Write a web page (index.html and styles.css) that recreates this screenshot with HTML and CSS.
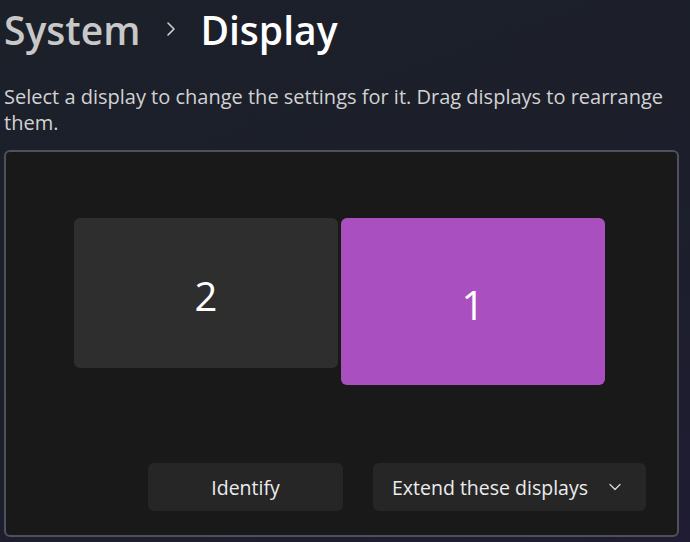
FILE: index.html
```html
<!DOCTYPE html>
<html>
<head>
<meta charset="utf-8">
<link rel="stylesheet" href="styles.css">
</head>
<body>
<div class="page">
  <div class="title">
    <span class="crumb">System</span>
    <svg class="sep" width="14" height="16" viewBox="0 0 14 16"><path d="M4 2 L10 8 L4 14" fill="none" stroke="#cfcfcf" stroke-width="1.6" stroke-linecap="round" stroke-linejoin="round"/></svg>
    <span class="current">Display</span>
  </div>
  <p class="desc">Select a display to change the settings for it. Drag displays to rearrange them.</p>
  <div class="panel">
    <div class="monitors">
      <div class="mon mon2">2</div>
      <div class="mon mon1">1</div>
    </div>
    <div class="actions">
      <button class="btn identify">Identify</button>
      <button class="btn dropdown">Extend these displays
        <svg width="14" height="10" viewBox="0 0 14 10"><path d="M2 2.5 L7 7.5 L12 2.5" fill="none" stroke="#d8d8d8" stroke-width="1.3" stroke-linecap="round" stroke-linejoin="round"/></svg>
      </button>
    </div>
  </div>
</div>
</body>
</html>
```
FILE: styles.css
```css
html, body {
  margin: 0;
  padding: 0;
}
body {
  width: 690px;
  height: 542px;
  overflow: hidden;
  background: linear-gradient(160deg, #1c2029 0%, #1c1f2b 55%, #1f1c33 100%);
  font-family: "Open Sans", "Noto Sans", sans-serif;
  color: #fff;
}
.page {
  padding: 0 0 0 4px;
}
.title {
  display: flex;
  align-items: center;
  height: 58px;
}
.crumb {
  font-size: 39px;
  font-weight: 600;
  color: #c8c8c8;
}
.sep {
  margin: 0 22px 0 24px;
  position: relative;
  top: 0;
}
.current {
  font-size: 39px;
  font-weight: 600;
  color: #ffffff;
}
.desc {
  margin: 26px 0 0 0;
  font-size: 20px;
  line-height: 26px;
  color: #d2d2d2;
  width: 680px;
}
.panel {
  margin-top: 14px;
  width: 671px;
  height: 383px;
  border: 2px solid #4e5159;
  border-radius: 6px;
  background: #191919;
  display: flex;
  flex-direction: column;
}
.monitors {
  display: flex;
  align-items: flex-start;
  gap: 3px;
  padding: 66px 0 0 68px;
}
.mon {
  display: flex;
  align-items: center;
  justify-content: center;
  box-sizing: border-box;
  padding-top: 5px;
  border-radius: 6px;
  font-size: 40px;
  color: #ffffff;
  width: 264px;
}
.mon2 {
  height: 150px;
  background: #2e2e2e;
}
.mon1 {
  height: 167px;
  background: #aa4fbf;
}
.actions {
  display: flex;
  gap: 30px;
  padding: 78px 0 0 142px;
}
.btn {
  height: 48px;
  border: none;
  border-radius: 6px;
  background: #262626;
  color: #ececec;
  font-family: "Open Sans", "Noto Sans", sans-serif;
  font-size: 19.5px;
  padding: 0;
}
.identify {
  width: 195px;
}
.dropdown {
  width: 273px;
  display: flex;
  align-items: center;
  justify-content: space-between;
  padding: 0 24px 0 19px;
}
```
